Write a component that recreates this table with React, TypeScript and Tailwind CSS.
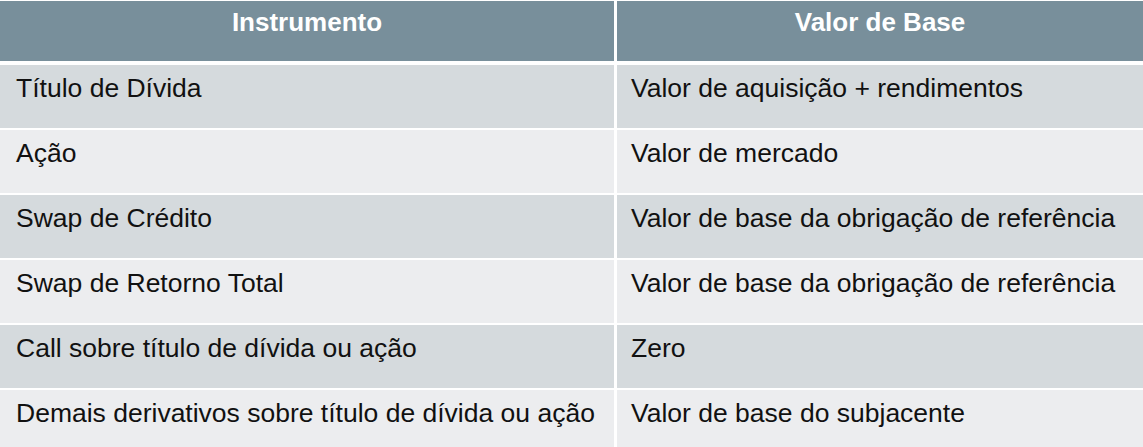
const rows: [string, string][] = [
  ["Título de Dívida", "Valor de aquisição + rendimentos"],
  ["Ação", "Valor de mercado"],
  ["Swap de Crédito", "Valor de base da obrigação de referência"],
  ["Swap de Retorno Total", "Valor de base da obrigação de referência"],
  ["Call sobre título de dívida ou ação", "Zero"],
  ["Demais derivativos sobre título de dívida ou ação", "Valor de base do subjacente"],
];

export default function App() {
  return (
    <div
      className="w-[1143px] h-[447px] overflow-hidden bg-white pt-px flex flex-col gap-[2px] text-[26.5px] leading-[1.15]"
      style={{ fontFamily: '"Liberation Sans", Arial, sans-serif' }}
    >
      {/* Header */}
      <div className="grid grid-cols-[614px_1fr] gap-x-[3px] h-[60px] mb-[2px] shrink-0 text-[26px]">
        <div className="bg-[#788f9b] text-white font-bold text-center pt-[7px]">Instrumento</div>
        <div className="bg-[#788f9b] text-white font-bold text-center pt-[7px]">Valor de Base</div>
      </div>

      {rows.map(([a, b], i) => (
        <div key={i} className="grid grid-cols-[614px_1fr] gap-x-[3px] h-[63px] shrink-0 text-[#111]">
          <div className={`${i % 2 === 0 ? "bg-[#d5dadd]" : "bg-[#ecedef]"} pl-[16px] pt-[8px] whitespace-nowrap`}>
            {a}
          </div>
          <div className={`${i % 2 === 0 ? "bg-[#d5dadd]" : "bg-[#ecedef]"} pl-[14px] pt-[8px] whitespace-nowrap`}>
            {b}
          </div>
        </div>
      ))}
    </div>
  );
}
